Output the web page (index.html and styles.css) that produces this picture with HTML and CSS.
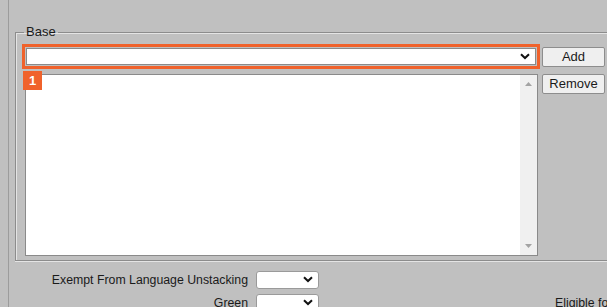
FILE: index.html
```html
<!DOCTYPE html>
<html>
<head>
<meta charset="utf-8">
<link rel="stylesheet" href="styles.css">
</head>
<body>
<div class="frame">
  <fieldset class="base">
    <legend>Base</legend>
    <div class="row">
      <div class="hl">
        <div class="sel wide"><span class="chev"><svg width="10" height="7" viewBox="0 0 10 7"><path d="M1 1.2 L5 5 L9 1.2" fill="none" stroke="#111" stroke-width="2"/></svg></span></div>
      </div>
      <button class="btn add">Add</button>
    </div>
    <div class="row row2">
      <div class="listwrap">
        <div class="list">
          <div class="sb">
            <svg class="arr" width="7" height="4" viewBox="0 0 7 4"><path d="M0 4 L3.5 0 L7 4Z" fill="#a3a3a3"/></svg>
            <svg class="arr" width="7" height="4" viewBox="0 0 7 4"><path d="M0 0 L3.5 4 L7 0Z" fill="#a3a3a3"/></svg>
          </div>
        </div>
        <span class="badge">1</span>
      </div>
      <button class="btn rem">Remove</button>
    </div>
  </fieldset>
  <div class="form">
    <label class="lbl">Exempt From Language Unstacking</label>
    <div class="sel small"><span class="chev"><svg width="10" height="7" viewBox="0 0 10 7"><path d="M1 1.2 L5 5 L9 1.2" fill="none" stroke="#111" stroke-width="2"/></svg></span></div>
    <span></span>
    <label class="lbl">Green</label>
    <div class="sel small"><span class="chev"><svg width="10" height="7" viewBox="0 0 10 7"><path d="M1 1.2 L5 5 L9 1.2" fill="none" stroke="#111" stroke-width="2"/></svg></span></div>
    <label class="lbl2">Eligible for Sale</label>
  </div>
</div>
</body>
</html>
```
FILE: styles.css
```css
html, body {
  margin: 0;
  padding: 0;
  background: #c0c0c0;
  overflow: hidden;
  height: 307px;
  font-family: "Liberation Sans", Arial, sans-serif;
  font-size: 12.3px;
  color: #1a1a1a;
}
.frame {
  margin-left: 8px;
  border-left: 1px solid #9c9c9c;
  box-shadow: 1px 0 0 #d6d6d6;
  height: 307px;
  padding-top: 25px;
  padding-left: 6px;
  box-sizing: border-box;
  width: 640px;
}
.base {
  margin: 0;
  border: none;
  border-top: 1px solid #8c8c8c;
  border-left: 1px solid #8c8c8c;
  border-bottom: 1px solid #8c8c8c;
  box-shadow: inset 1px 1px 0 #e4e4e4, 0 1px 0 #e4e4e4;
  padding: 5px 0 4px 6px;
  width: 640px;
  box-sizing: border-box;
}
.base legend {
  padding: 0 2px;
  margin-left: 2px;
  line-height: 14px;
  font-size: 13px;
}
.row {
  display: flex;
  align-items: flex-start;
}
.hl {
  border: 3px solid #f0622b;
  padding: 1px;
  width: 518px;
  box-sizing: border-box;
  height: 25px;
}
.sel {
  background: #fff;
  border: 1px solid #8d8d8d;
  border-radius: 2px;
  box-sizing: border-box;
  position: relative;
}
.sel.wide {
  height: 17px;
  border-color: #8a8a8a;
  border-radius: 0;
}
.chev {
  position: absolute;
  right: 5px;
  top: 4px;
  display: flex;
}
.btn {
  font-family: "Liberation Sans", Arial, sans-serif;
  font-size: 13px;
  color: #1a1a1a;
  background: #efefef;
  border: 1px solid #8d8d8d;
  border-radius: 2px;
  width: 63px;
  height: 20px;
  padding: 0;
  margin-left: 2px;
  margin-top: 3px;
  line-height: 18px;
}
.row2 {
  margin-top: 5px;
}
.listwrap {
  position: relative;
  padding-left: 3px;
  width: 518px;
  box-sizing: border-box;
}
.list {
  width: 513px;
  height: 182px;
  background: #fff;
  border: 1px solid #8a8a8a;
  box-sizing: border-box;
  display: flex;
  justify-content: flex-end;
}
.sb {
  width: 17px;
  background: #f0f0f0;
  display: flex;
  flex-direction: column;
  justify-content: space-between;
  align-items: center;
  padding: 7px 0 7px;
}
.badge {
  position: absolute;
  left: 1px;
  top: -3px;
  width: 19px;
  height: 19px;
  background: #f0622b;
  color: #fff;
  font-weight: bold;
  font-size: 13px;
  line-height: 19px;
  text-align: center;
}
.rem {
  margin-top: 0;
  margin-left: 2px;
}
.form {
  display: grid;
  grid-template-columns: 233px 63px 290px;
  column-gap: 8px;
  row-gap: 5px;
  margin-top: 10px;
  align-items: center;
}
.lbl {
  text-align: right;
}
.sel.small {
  height: 18px;
  width: 63px;
  border-color: #9a9a9a;
  border-radius: 3px;
}
.lbl2 {
  padding-left: 228px;
  white-space: nowrap;
}
```
